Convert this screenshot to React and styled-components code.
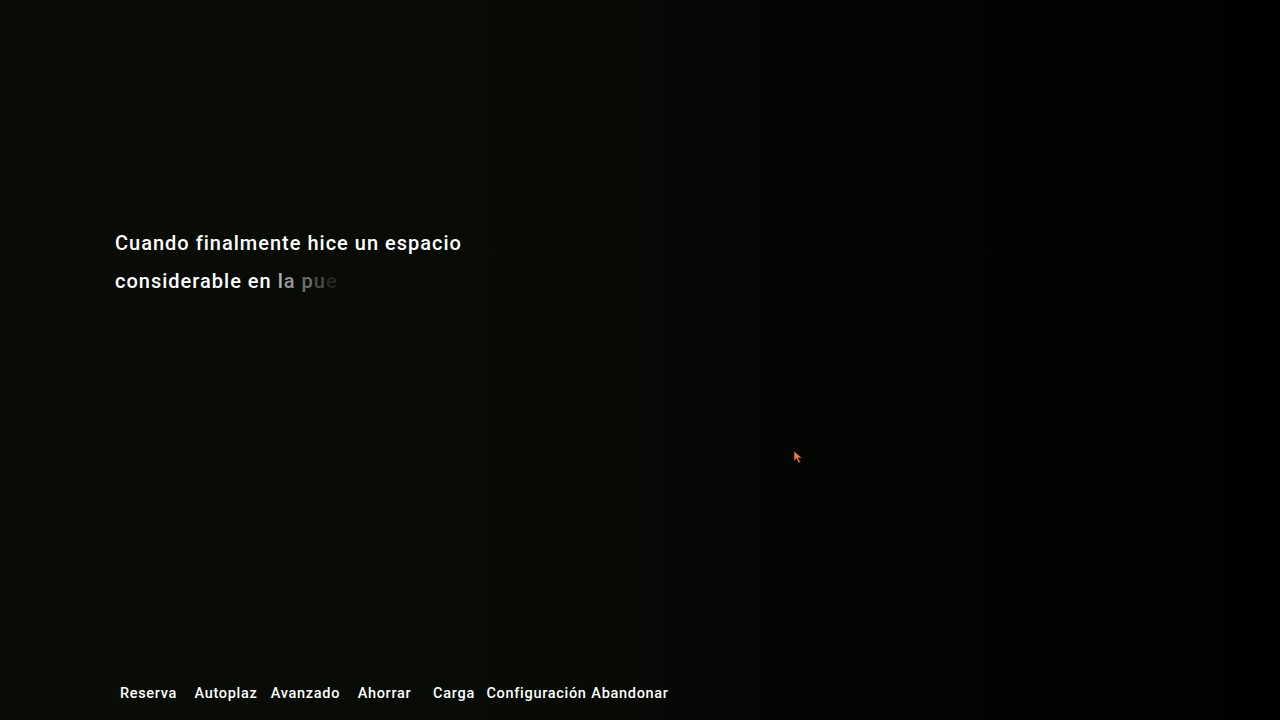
import React from "react";
import styled, { createGlobalStyle } from "styled-components";

const Global = createGlobalStyle`
  html, body {
    margin: 0;
    padding: 0;
    background: #000;
  }
`;

const Screen = styled.div`
  position: relative;
  width: 1280px;
  height: 720px;
  overflow: hidden;
  background: linear-gradient(90deg, #0a0c07 0%, #070a05 45%, #030403 70%, #010101 100%);
  font-family: Roboto, "Liberation Sans", sans-serif;
  display: flex;
  flex-direction: column;
`;

const Dialogue = styled.div`
  padding: 224px 0 0 115px;
  width: 380px;
  flex: 1;
`;

const Line = styled.div`
  font-size: 20px;
  font-weight: 500;
  line-height: 38px;
  color: #ffffff;
  letter-spacing: 1px;
  white-space: nowrap;
`;

const Fade = styled.span`
  color: ${(p) => p.$color};
`;

const QuickMenu = styled.nav`
  display: flex;
  align-items: center;
  padding: 0 0 18px 110px;
`;

const MenuItem = styled.span`
  font-size: 14.5px;
  font-weight: 500;
  color: #ffffff;
  text-align: center;
  width: ${(p) => p.$w}px;
  letter-spacing: 0.7px;
  white-space: nowrap;
`;

const Cursor = styled.svg`
  position: absolute;
  left: 793px;
  top: 450px;
`;

const items = [
  ["Reserva", 77],
  ["Autoplaz", 78],
  ["Avanzado", 81],
  ["Ahorrar", 77],
  ["Carga", 62],
  ["Configuración", 103],
  ["Abandonar", 84],
];

export default function App() {
  return (
    <Screen>
      <Global />
      <Dialogue>
        <Line>Cuando finalmente hice un espacio</Line>
        <Line>
          considerable en <Fade $color="#b0b0b0">l</Fade>
          <Fade $color="#969696">a</Fade> <Fade $color="#6e6e6e">p</Fade>
          <Fade $color="#4a4a4a">u</Fade>
          <Fade $color="#262626">e</Fade>
        </Line>
      </Dialogue>
      <QuickMenu>
        {items.map(([label, w]) => (
          <MenuItem key={label} $w={w}>
            {label}
          </MenuItem>
        ))}
      </QuickMenu>
      <Cursor width="12" height="14" viewBox="0 0 12 14">
        <path d="M1 1 L1 11 L3.5 8.6 L5.6 13 L7.4 12.2 L5.3 7.9 L8.8 7.9 Z" fill="#e8784e" stroke="#2a120a" strokeWidth="0.6" />
      </Cursor>
    </Screen>
  );
}
